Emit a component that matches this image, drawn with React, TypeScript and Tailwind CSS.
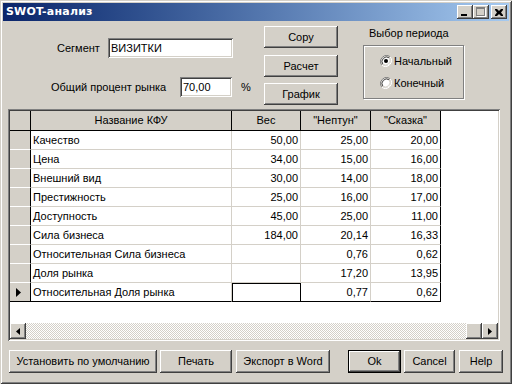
const raised =
  'bg-[#d4d0c8] shadow-[inset_-1px_-1px_#404040,inset_1px_1px_#ffffff,inset_-2px_-2px_#808080,inset_2px_2px_#d4d0c8]';
const sunken =
  'bg-white shadow-[inset_1px_1px_#808080,inset_-1px_-1px_#ffffff,inset_2px_2px_#404040,inset_-2px_-2px_#d4d0c8]';

const rows = [
  { name: 'Качество', w: '50,00', a: '25,00', b: '20,00' },
  { name: 'Цена', w: '34,00', a: '15,00', b: '16,00' },
  { name: 'Внешний вид', w: '30,00', a: '14,00', b: '18,00' },
  { name: 'Престижность', w: '25,00', a: '16,00', b: '17,00' },
  { name: 'Доступность', w: '45,00', a: '25,00', b: '11,00' },
  { name: 'Сила бизнеса', w: '184,00', a: '20,14', b: '16,33' },
  { name: 'Относительная Сила бизнеса', w: '', a: '0,76', b: '0,62' },
  { name: 'Доля рынка', w: '', a: '17,20', b: '13,95' },
  { name: 'Относительная Доля рынка', w: '', a: '0,77', b: '0,62' },
];

function Btn({ label, className }: { label: string; className: string }) {
  return (
    <div className={`${raised} flex items-center justify-center ${className}`}>
      <span>{label}</span>
    </div>
  );
}

function Radio({ checked, label }: { checked?: boolean; label: string }) {
  return (
    <div className="flex items-center h-[12px]">
      <svg width="12" height="12" viewBox="0 0 12 12">
        <path d="M10.2 1.8 A6 6 0 0 0 1.8 10.2" stroke="#808080" strokeWidth="1" fill="none" />
        <path d="M1.8 10.2 A6 6 0 0 0 10.2 1.8" stroke="#ffffff" strokeWidth="1" fill="none" />
        <circle cx="6" cy="6" r="4.5" fill="#ffffff" />
        <path d="M9.2 2.8 A4.6 4.6 0 0 0 2.8 9.2" stroke="#404040" strokeWidth="1" fill="none" />
        <path d="M2.8 9.2 A4.6 4.6 0 0 0 9.2 2.8" stroke="#d4d0c8" strokeWidth="1" fill="none" />
        {checked && <circle cx="6" cy="6" r="2" fill="#000000" />}
      </svg>
      <span className="ml-[2px]">{label}</span>
    </div>
  );
}

export default function App() {
  return (
    <div className="w-[512px] h-[384px] bg-[#d4d0c8] p-[3px] flex flex-col text-[11px] text-black font-['Liberation_Sans',Arial,sans-serif] shadow-[inset_1px_1px_#d4d0c8,inset_-1px_-1px_#404040,inset_2px_2px_#ffffff,inset_-2px_-2px_#808080] overflow-hidden">
      {/* заголовок окна */}
      <div className="h-[18px] flex items-center justify-between bg-gradient-to-r from-[#0a246a] to-[#a6caf0] pl-[3px] pr-[2px]">
        <span className="text-white font-bold font-['DejaVu_Sans',sans-serif] text-[11px] tracking-[0.2px]">SWOT-анализ</span>
        <div className="flex items-center">
          <div className={`${raised} w-[16px] h-[14px] relative`}>
            <div className="absolute left-[4px] top-[9px] w-[6px] h-[2px] bg-black" />
          </div>
          <div className={`${raised} w-[16px] h-[14px] relative`}>
            <div className="absolute left-[3px] top-[2px] w-[9px] h-[9px] border border-t-2 border-[#808080] shadow-[1px_1px_#ffffff]" />
          </div>
          <div className={`${raised} w-[16px] h-[14px] ml-[2px] flex items-center justify-center`}>
            <svg width="8" height="7" viewBox="0 0 8 7">
              <path d="M0 0h2l2 2 2-2h2v1l-2 2.5 2 2.5v1h-2l-2-2-2 2h-2v-1l2-2.5-2-2.5z" fill="#000" />
            </svg>
          </div>
        </div>
      </div>

      {/* верхняя часть */}
      <div className="h-[88px] flex">
        <div className="w-[261px] flex flex-col">
          <div className="flex items-center mt-[17px] pl-[54px]">
            <span className="w-[51px]">Сегмент</span>
            <div className={`${sunken} w-[125px] h-[20px] flex items-center pl-[3px]`}>ВИЗИТКИ</div>
          </div>
          <div className="flex items-center mt-[19px] pl-[48px]">
            <span className="w-[129px]">Общий процент рынка</span>
            <div className={`${sunken} w-[52px] h-[20px] flex items-center pl-[3px]`}>70,00</div>
            <span className="ml-[9px]">%</span>
          </div>
        </div>
        <div className="w-[74px] flex flex-col">
          <Btn label="Copy" className="h-[22px] mt-[5px]" />
          <Btn label="Расчет" className="h-[22px] mt-[7px]" />
          <Btn label="График" className="h-[22px] mt-[6px]" />
        </div>
        <div className="ml-[25px] w-[101px] flex flex-col">
          <span className="mt-[6px] ml-[6px] leading-[13px]">Выбор периода</span>
          <div className="mt-[5px] h-[54px] border border-[#808080] shadow-[inset_1px_1px_#ffffff,1px_1px_#ffffff] flex flex-col pl-[16px] pt-[9px] gap-[10px]">
            <Radio checked label="Начальный" />
            <Radio label="Конечный" />
          </div>
        </div>
      </div>

      {/* таблица */}
      <div className={`${sunken} ml-[5px] w-[492px] h-[232px] p-[2px] flex flex-col`}>
        <div className="flex h-[20px]">
          <div className="w-[21px] bg-[#d4d0c8] border-r border-b border-black" />
          {[
            ['Название КФУ', 'w-[201px]'],
            ['Вес', 'w-[69px]'],
            ['"Нептун"', 'w-[70px]'],
            ['"Сказка"', 'w-[70px]'],
          ].map(([t, w]) => (
            <div key={t} className={`${w} bg-[#d4d0c8] border-r border-b border-black flex items-center justify-center`}>
              {t}
            </div>
          ))}
        </div>
        {rows.map((r, i) => {
          const last = i === rows.length - 1;
          const bb = last ? 'border-b-black' : 'border-b-[#d4d0c8]';
          return (
            <div key={r.name} className="flex h-[19px]">
              <div className={`w-[21px] bg-[#d4d0c8] border-r border-r-black border-b ${last ? 'border-b-black' : 'border-b-white'} flex items-center pl-[6px]`}>
                {last && (
                  <svg width="5" height="9" viewBox="0 0 5 9">
                    <path d="M0 0 L5 4.5 L0 9 Z" fill="#000" />
                  </svg>
                )}
              </div>
              <div className={`w-[201px] border-r border-r-[#d4d0c8] border-b ${bb} flex items-center pl-[2px]`}>{r.name}</div>
              <div
                className={`w-[69px] border-r border-b flex items-center justify-end pr-[2px] ${
                  last ? 'border-r-black border-b-black shadow-[inset_1px_1px_#000000]' : `border-r-[#d4d0c8] ${bb}`
                }`}
              >
                {r.w}
              </div>
              <div className={`w-[70px] border-r border-r-[#d4d0c8] border-b ${bb} flex items-center justify-end pr-[2px]`}>{r.a}</div>
              <div className={`w-[70px] border-r border-r-black border-b ${bb} flex items-center justify-end pr-[2px]`}>{r.b}</div>
            </div>
          );
        })}
        <div className="flex-1" />
        <div className="h-[16px] flex">
          <div className={`${raised} w-[16px] flex items-center justify-center`}>
            <svg width="4" height="7" viewBox="0 0 4 7">
              <path d="M4 0 L0 3.5 L4 7 Z" fill="#000" />
            </svg>
          </div>
          <div className="flex-1 bg-[repeating-conic-gradient(#d4d0c8_0%_25%,#ffffff_0%_50%)] bg-size-[2px_2px]" />
          <div className={`${raised} w-[16px]`} />
          <div className={`${raised} w-[16px] flex items-center justify-center`}>
            <svg width="4" height="7" viewBox="0 0 4 7">
              <path d="M0 0 L4 3.5 L0 7 Z" fill="#000" />
            </svg>
          </div>
        </div>
      </div>

      {/* кнопки внизу */}
      <div className="flex mt-[9px] ml-[6px] h-[23px]">
        <Btn label="Установить по умолчанию" className="w-[148px]" />
        <Btn label="Печать" className="w-[72px] ml-[3px]" />
        <Btn label="Экспорт в Word" className="w-[94px] ml-[4px]" />
        <div className="w-[53px] ml-[18px] border border-black">
          <Btn label="Ok" className="w-full h-full" />
        </div>
        <Btn label="Cancel" className="w-[51px] ml-[3px]" />
        <Btn label="Help" className="w-[44px] ml-[4px]" />
      </div>
    </div>
  );
}
